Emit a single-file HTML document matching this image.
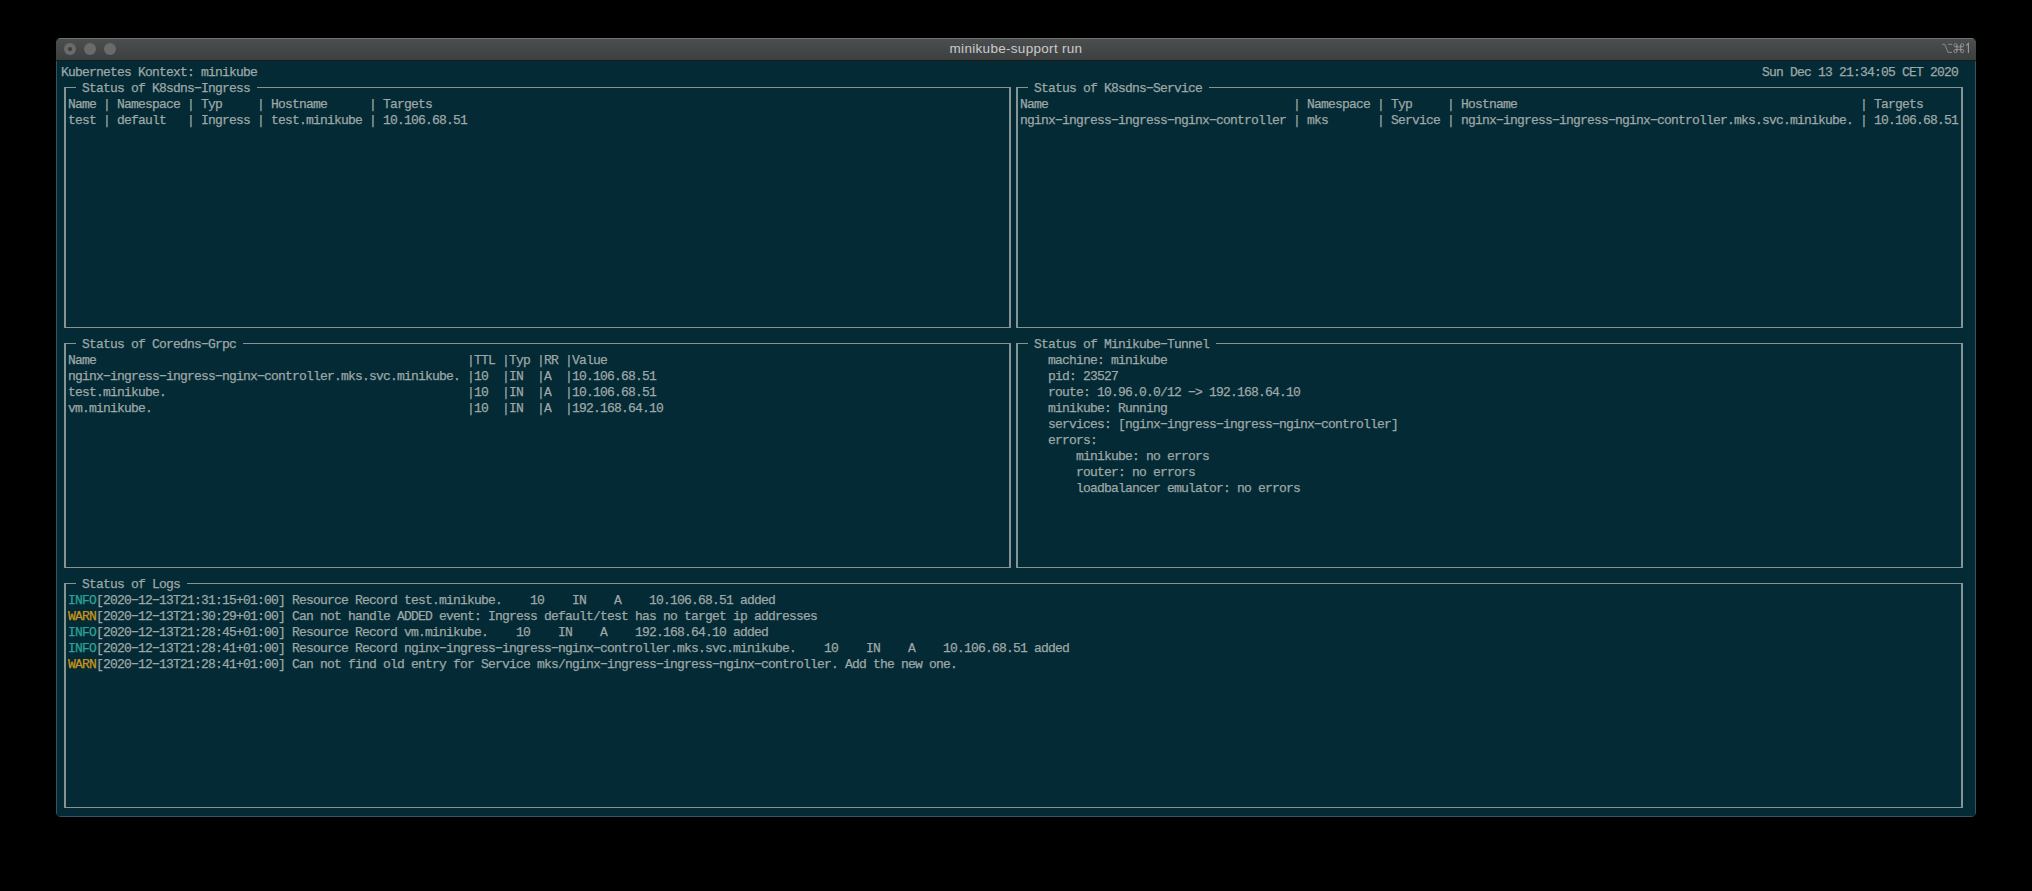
<!DOCTYPE html>
<html><head><meta charset="utf-8"><style>
html,body{margin:0;padding:0;background:#000;width:2032px;height:891px;overflow:hidden;position:relative}
#win{position:absolute;left:56px;top:38px;width:1920px;height:779px;border-radius:5px;overflow:hidden;background:#434445}
#ct{position:absolute;left:0;top:23px;width:1920px;height:756px;background:#042a35;box-shadow:inset 1px 0 0 #35545d,inset -1px 0 0 #35545d,inset 0 -1px 0 #35545d}
#tb{position:absolute;left:0;top:0;width:1920px;height:22px;background:linear-gradient(#4c4f50,#3d4041);border-bottom:1px solid #1a1b1b;box-shadow:inset 0 1px 0 #6f7171}
#title{position:absolute;left:0;width:1920px;top:3px;text-align:center;font:13.5px/16px "Liberation Sans",sans-serif;letter-spacing:0.3px;color:#cbcbcb}
.tl{position:absolute;top:5px;width:12px;height:12px;border-radius:50%;background:#6a6a6a}

pre{position:absolute;margin:0;font-family:"Liberation Mono",monospace;font-size:13.0px;line-height:16px;letter-spacing:-0.8013px;color:#9da7a6;white-space:pre;-webkit-text-stroke:0.25px #9da7a6}
pre.c{color:#2ba39a;-webkit-text-stroke-color:#2ba39a}
pre.y{color:#c9961b;-webkit-text-stroke-color:#c9961b}
i{position:absolute;background:#869494}
</style></head><body>
<div id="win"><div id="ct"></div><div id="tb">
<div class="tl" style="left:8px"><div style="position:absolute;left:4px;top:4px;width:4px;height:4px;border-radius:50%;background:#3b3b3b"></div></div>
<div class="tl" style="left:28px"></div>
<div class="tl" style="left:48px"></div>
<div id="title">minikube-support run</div>
<svg id="sc" width="40" height="18" viewBox="0 0 40 18" style="position:absolute;left:1880px;top:2px"><g fill="none" stroke="#9c9c9c" stroke-width="0.8"><path d="M6.1,4.3H8.7L12.1,12.4H16M12.1,4.3H16"/><path d="M19.5,6.9H26.2M19.5,9.4H26.2M21,5.2V11.1M24.6,5.2V11.1"/><circle cx="19.5" cy="5.2" r="1.6"/><circle cx="26.2" cy="5.2" r="1.6"/><circle cx="19.5" cy="11.1" r="1.6"/><circle cx="26.2" cy="11.1" r="1.6"/></g><path d="M30.2,5.4L32.4,3.5V12.9" fill="none" stroke="#9c9c9c" stroke-width="1.1"/></svg>
</div></div>
<pre style="left:61px;top:64.5px">Kubernetes Kontext: minikube</pre>
<pre style="left:1762px;top:64.5px">Sun Dec 13 21:34:05 CET 2020</pre>
<pre style="left:82px;top:80.5px">Status of K8sdns−Ingress</pre>
<pre style="left:1034px;top:80.5px">Status of K8sdns−Service</pre>
<pre style="left:68px;top:96.5px">Name | Namespace | Typ     | Hostname      | Targets</pre>
<pre style="left:1020px;top:96.5px">Name                                   | Namespace | Typ     | Hostname                                                 | Targets</pre>
<pre style="left:68px;top:112.5px">test | default   | Ingress | test.minikube | 10.106.68.51</pre>
<pre style="left:1020px;top:112.5px">nginx−ingress−ingress−nginx−controller | mks       | Service | nginx−ingress−ingress−nginx−controller.mks.svc.minikube. | 10.106.68.51</pre>
<pre style="left:82px;top:336.5px">Status of Coredns−Grpc</pre>
<pre style="left:1034px;top:336.5px">Status of Minikube−Tunnel</pre>
<pre style="left:68px;top:352.5px">Name                                                     |TTL |Typ |RR |Value</pre>
<pre style="left:1048px;top:352.5px">machine: minikube</pre>
<pre style="left:68px;top:368.5px">nginx−ingress−ingress−nginx−controller.mks.svc.minikube. |10  |IN  |A  |10.106.68.51</pre>
<pre style="left:1048px;top:368.5px">pid: 23527</pre>
<pre style="left:68px;top:384.5px">test.minikube.                                           |10  |IN  |A  |10.106.68.51</pre>
<pre style="left:1048px;top:384.5px">route: 10.96.0.0/12 −&gt; 192.168.64.10</pre>
<pre style="left:68px;top:400.5px">vm.minikube.                                             |10  |IN  |A  |192.168.64.10</pre>
<pre style="left:1048px;top:400.5px">minikube: Running</pre>
<pre style="left:1048px;top:416.5px">services: [nginx−ingress−ingress−nginx−controller]</pre>
<pre style="left:1048px;top:432.5px">errors:</pre>
<pre style="left:1076px;top:448.5px">minikube: no errors</pre>
<pre style="left:1076px;top:464.5px">router: no errors</pre>
<pre style="left:1076px;top:480.5px">loadbalancer emulator: no errors</pre>
<pre style="left:82px;top:576.5px">Status of Logs</pre>
<pre class="c" style="left:68px;top:592.5px">INFO</pre>
<pre style="left:96px;top:592.5px">[2020−12−13T21:31:15+01:00] Resource Record test.minikube.    10    IN    A    10.106.68.51 added</pre>
<pre class="y" style="left:68px;top:608.5px">WARN</pre>
<pre style="left:96px;top:608.5px">[2020−12−13T21:30:29+01:00] Can not handle ADDED event: Ingress default/test has no target ip addresses</pre>
<pre class="c" style="left:68px;top:624.5px">INFO</pre>
<pre style="left:96px;top:624.5px">[2020−12−13T21:28:45+01:00] Resource Record vm.minikube.    10    IN    A    192.168.64.10 added</pre>
<pre class="c" style="left:68px;top:640.5px">INFO</pre>
<pre style="left:96px;top:640.5px">[2020−12−13T21:28:41+01:00] Resource Record nginx−ingress−ingress−nginx−controller.mks.svc.minikube.    10    IN    A    10.106.68.51 added</pre>
<pre class="y" style="left:68px;top:656.5px">WARN</pre>
<pre style="left:96px;top:656.5px">[2020−12−13T21:28:41+01:00] Can not find old entry for Service mks/nginx−ingress−ingress−nginx−controller. Add the new one.</pre>
<i style="left:64px;top:87px;width:2px;height:241px"></i>
<i style="left:1009px;top:87px;width:2px;height:241px"></i>
<i style="left:64px;top:327px;width:947px;height:1px"></i>
<i style="left:64px;top:87px;width:12px;height:1px"></i>
<i style="left:257px;top:87px;width:754px;height:1px"></i>
<i style="left:1016px;top:87px;width:2px;height:241px"></i>
<i style="left:1961px;top:87px;width:2px;height:241px"></i>
<i style="left:1016px;top:327px;width:947px;height:1px"></i>
<i style="left:1016px;top:87px;width:12px;height:1px"></i>
<i style="left:1209px;top:87px;width:754px;height:1px"></i>
<i style="left:64px;top:343px;width:2px;height:225px"></i>
<i style="left:1009px;top:343px;width:2px;height:225px"></i>
<i style="left:64px;top:567px;width:947px;height:1px"></i>
<i style="left:64px;top:343px;width:12px;height:1px"></i>
<i style="left:243px;top:343px;width:768px;height:1px"></i>
<i style="left:1016px;top:343px;width:2px;height:225px"></i>
<i style="left:1961px;top:343px;width:2px;height:225px"></i>
<i style="left:1016px;top:567px;width:947px;height:1px"></i>
<i style="left:1016px;top:343px;width:12px;height:1px"></i>
<i style="left:1216px;top:343px;width:747px;height:1px"></i>
<i style="left:64px;top:583px;width:2px;height:225px"></i>
<i style="left:1961px;top:583px;width:2px;height:225px"></i>
<i style="left:64px;top:807px;width:1899px;height:1px"></i>
<i style="left:64px;top:583px;width:12px;height:1px"></i>
<i style="left:187px;top:583px;width:1776px;height:1px"></i>
</body></html>
